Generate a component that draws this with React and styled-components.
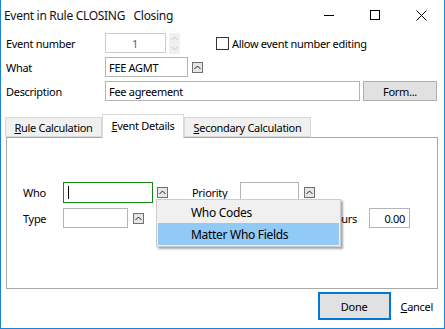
import React from "react";
import styled, { createGlobalStyle } from "styled-components";

const GlobalStyle = createGlobalStyle`
  html, body {
    margin: 0;
    padding: 0;
    background: #fff;
  }
  body {
    font-family: "Noto Sans", "Liberation Sans", sans-serif;
    font-size: 11px;
    letter-spacing: -0.3px;
    color: #000;
  }
`;

const Window = styled.div`
  width: 445px;
  height: 329px;
  box-sizing: border-box;
  border: 1px solid #1883d7;
  border-top: none;
  background: #fff;
  display: flex;
  flex-direction: column;
`;

const TitleBar = styled.div`
  display: flex;
  align-items: center;
  height: 30px;
  flex-shrink: 0;
`;

const Title = styled.div`
  flex: 1;
  padding-left: 3px;
  font-size: 12px;
  white-space: pre;
  color: #111;
`;

const WinButton = styled.div`
  width: 46px;
  height: 30px;
  display: flex;
  align-items: center;
  justify-content: center;
`;

const Body = styled.div`
  flex: 1;
  display: flex;
  flex-direction: column;
  padding: 3px 6px 0 5px;
`;

const Fields = styled.div`
  display: flex;
  flex-direction: column;
  gap: 4px;
`;

const Row = styled.div`
  display: flex;
  align-items: center;
  height: ${(p) => p.$h || 20}px;
  margin-top: ${(p) => p.$mt || 0}px;
  padding-right: ${(p) => p.$pr || 0}px;
`;

const Label = styled.span`
  width: ${(p) => p.$w}px;
  flex-shrink: 0;
  margin-left: ${(p) => (p.$push ? "auto" : `${p.$ml || 0}px`)};
  text-align: ${(p) => (p.$right ? "right" : "left")};
`;

const TextBox = styled.div`
  position: relative;
  width: ${(p) => p.$w}px;
  height: ${(p) => p.$h || 20}px;
  box-sizing: border-box;
  flex-shrink: 0;
  margin-left: ${(p) => p.$ml || 0}px;
  border: 1px solid ${(p) => (p.$focus ? "#0f8a0f" : p.$disabled ? "#cccccc" : "#b4b4b4")};
  background: #fff;
  color: ${(p) => (p.$disabled ? "#5c5c7a" : "#000")};
  display: flex;
  align-items: center;
  justify-content: ${(p) => (p.$align === "center" ? "center" : p.$align === "right" ? "flex-end" : "flex-start")};
  padding: 0 4px 0 3px;
  white-space: nowrap;
  overflow: hidden;
`;

const Caret = styled.span`
  width: 1px;
  height: 13px;
  background: #000;
  margin-left: 1px;
`;

const Spin = styled.div`
  width: 11px;
  height: 21px;
  margin-left: 3px;
  background: #f0f0f0;
  display: flex;
  flex-direction: column;
  align-items: center;
  justify-content: space-around;
  align-self: flex-start;
`;

const PickButton = styled.div`
  width: 11px;
  height: 11px;
  box-sizing: border-box;
  flex-shrink: 0;
  margin-left: ${(p) => p.$ml || 4}px;
  border: 1px solid #707070;
  background: #e6e6e6;
  display: flex;
  align-items: center;
  justify-content: center;
`;

const Anchor = styled.div`
  position: relative;
  display: flex;
`;

const CheckGroup = styled.label`
  display: flex;
  align-items: center;
  margin-left: 36px;
  gap: 3px;
`;

const CheckBox = styled.span`
  width: 13px;
  height: 13px;
  box-sizing: border-box;
  border: 1px solid #333;
  background: #fff;
`;

const PushButton = styled.div`
  width: ${(p) => p.$w}px;
  height: ${(p) => p.$h || 20}px;
  box-sizing: border-box;
  margin-left: ${(p) => p.$ml || 0}px;
  border: ${(p) => (p.$default ? "2px solid #0078d7" : "1px solid #adadad")};
  background: #e1e1e1;
  display: flex;
  align-items: center;
  justify-content: center;
`;

const TabStrip = styled.div`
  display: flex;
  align-items: flex-end;
  height: 23px;
  margin-top: 13px;
  margin-left: -1px;
  position: relative;
  z-index: 1;
`;

const Tab = styled.div`
  width: ${(p) => p.$w}px;
  height: ${(p) => (p.$active ? 24 : 20)}px;
  margin-bottom: ${(p) => (p.$active ? -1 : 0)}px;
  box-sizing: border-box;
  border: 1px solid #d9d9d9;
  border-bottom: ${(p) => (p.$active ? "none" : "1px solid #d9d9d9")};
  background: ${(p) => (p.$active ? "#fff" : "#f0f0f0")};
  display: flex;
  align-items: ${(p) => (p.$active ? "flex-start" : "center")};
  padding-top: ${(p) => (p.$active ? 3 : 0)}px;
  justify-content: center;
  white-space: nowrap;
`;

const Panel = styled.div`
  height: 152px;
  box-sizing: border-box;
  border: 1px solid #a9a9a9;
  padding: 44px 0 0 16px;
  display: flex;
  flex-direction: column;
`;

const Menu = styled.div`
  position: absolute;
  top: 12px;
  left: 3px;
  width: 185px;
  box-sizing: border-box;
  border: 1px solid #cccccc;
  background: #f0f0f0;
  padding: 1px;
  box-shadow: 2px 2px 2px rgba(0, 0, 0, 0.35);
  z-index: 5;
`;

const MenuItem = styled.div`
  height: 22px;
  display: flex;
  align-items: center;
  padding-left: 33px;
  font-size: 12px;
  background: ${(p) => (p.$hot ? "#91c9f7" : "transparent")};
  white-space: nowrap;
`;

const Footer = styled.div`
  display: flex;
  align-items: center;
  justify-content: flex-end;
  margin-top: 3px;
  padding-right: 5px;
  gap: 10px;
`;

const LinkButton = styled.div`
  height: 28px;
  display: flex;
  align-items: center;
`;

const U = styled.span`
  text-decoration: underline;
`;

const Chevron = ({ down, color = "#222", w = 9, h = 9 }) => (
  <svg width={w} height={h} viewBox="0 0 9 9">
    <path
      d={down ? "M1.5 3 L4.5 6 L7.5 3" : "M1.5 6 L4.5 3 L7.5 6"}
      fill="none"
      stroke={color}
      strokeWidth="1"
    />
  </svg>
);

export default function App() {
  return (
    <>
      <GlobalStyle />
      <Window>
        <TitleBar>
          <Title>{"Event in Rule CLOSING   Closing"}</Title>
          <WinButton>
            <svg width="10" height="10" viewBox="0 0 10 10">
              <path d="M0 5.5 H10" stroke="#000" strokeWidth="1" />
            </svg>
          </WinButton>
          <WinButton>
            <svg width="10" height="10" viewBox="0 0 10 10">
              <rect x="0.5" y="0.5" width="9" height="9" fill="none" stroke="#000" />
            </svg>
          </WinButton>
          <WinButton>
            <svg width="11" height="11" viewBox="0 0 11 11">
              <path d="M0.5 0.5 L10.5 10.5 M10.5 0.5 L0.5 10.5" stroke="#000" strokeWidth="1" />
            </svg>
          </WinButton>
        </TitleBar>

        <Body>
          <Fields>
            <Row>
              <Label $w={99}>Event number</Label>
              <TextBox $w={61} $disabled $align="center">1</TextBox>
              <Spin>
                <Chevron color="#c2c2c2" />
                <Chevron down color="#c2c2c2" />
              </Spin>
              <CheckGroup>
                <CheckBox />
                Allow event number editing
              </CheckGroup>
            </Row>
            <Row>
              <Label $w={99}>What</Label>
              <TextBox $w={83}>FEE AGMT</TextBox>
              <PickButton>
                <Chevron />
              </PickButton>
            </Row>
            <Row>
              <Label $w={99}>Description</Label>
              <TextBox $w={255}>Fee agreement</TextBox>
              <PushButton $w={74} $ml={3}>Form...</PushButton>
            </Row>
          </Fields>

          <TabStrip>
            <Tab $w={97}>
              <span>
                <U>R</U>ule Calculation
              </span>
            </Tab>
            <Tab $w={82} $active>
              <span>
                <U>E</U>vent Details
              </span>
            </Tab>
            <Tab $w={127}>
              <span>
                <U>S</U>econdary Calculation
              </span>
            </Tab>
          </TabStrip>

          <Panel>
            <Row $h={21}>
              <Label $w={40}>Who</Label>
              <TextBox $w={90} $h={21} $focus>
                <Caret />
              </TextBox>
              <Anchor>
                <PickButton>
                  <Chevron />
                </PickButton>
                <Menu>
                  <MenuItem>Who Codes</MenuItem>
                  <MenuItem $hot>Matter Who Fields</MenuItem>
                </Menu>
              </Anchor>
              <Label $w={48} $ml={24}>Priority</Label>
              <TextBox $w={59} $h={21} />
              <PickButton $ml={5}>
                <Chevron />
              </PickButton>
            </Row>
            <Row $mt={5} $pr={27}>
              <Label $w={40}>Type</Label>
              <TextBox $w={65} />
              <PickButton $ml={5}>
                <Chevron />
              </PickButton>
              <Label $w={60} $push $right>
                Hours
              </Label>
              <TextBox $w={41} $ml={12} $align="right">
                0.00
              </TextBox>
            </Row>
          </Panel>

          <Footer>
            <PushButton $w={73} $h={28} $default>Done</PushButton>
            <LinkButton>
              <span>
                <U>C</U>ancel
              </span>
            </LinkButton>
          </Footer>
        </Body>
      </Window>
    </>
  );
}
